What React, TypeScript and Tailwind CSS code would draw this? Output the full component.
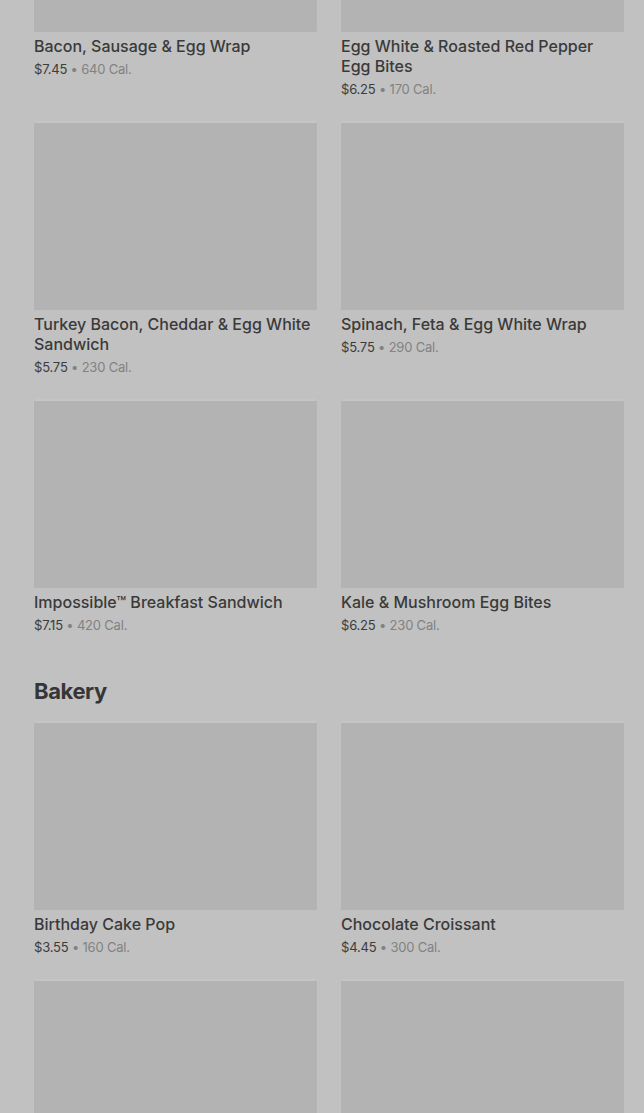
import React from "react";

type Item = { name: string; price: string; cal: string };

const breakfast: Item[] = [
  { name: "Bacon, Sausage & Egg Wrap", price: "$7.45", cal: "640 Cal." },
  { name: "Egg White & Roasted Red Pepper Egg Bites", price: "$6.25", cal: "170 Cal." },
  { name: "Turkey Bacon, Cheddar & Egg White Sandwich", price: "$5.75", cal: "230 Cal." },
  { name: "Spinach, Feta & Egg White Wrap", price: "$5.75", cal: "290 Cal." },
  { name: "Impossible™ Breakfast Sandwich", price: "$7.15", cal: "420 Cal." },
  { name: "Kale & Mushroom Egg Bites", price: "$6.25", cal: "230 Cal." },
];

const bakery: Item[] = [
  { name: "Birthday Cake Pop", price: "$3.55", cal: "160 Cal." },
  { name: "Chocolate Croissant", price: "$4.45", cal: "300 Cal." },
  { name: "", price: "", cal: "" },
  { name: "", price: "", cal: "" },
];

function Card({ item }: { item: Item }) {
  return (
    <div className="flex flex-col">
      <div className="h-[187px] bg-[#b3b3b3] shadow-[0_-2px_3px_rgba(200,200,200,0.6)]" />
      {item.name && (
        <>
          <div className="mt-1 text-[16px] leading-5 font-medium text-[#3a3a3a] tracking-normal">
            {item.name}
          </div>
          <div className="mt-[3px] text-[13px] leading-5 text-[#3c3c3c] tracking-[-0.2px]">
            {item.price}
            <span className="text-[#828282]"> • {item.cal}</span>
          </div>
        </>
      )}
    </div>
  );
}

export default function App() {
  return (
    <div
      className="bg-[#c1c1c1] h-[1113px] overflow-hidden"
      style={{ fontFamily: "Inter, 'Noto Sans', sans-serif" }}
    >
      <div className="pl-[34px] pr-[20px] -mt-[155px]">
        <div className="grid grid-cols-2 gap-x-6 gap-y-6">
          {breakfast.map((it, i) => (
            <Card key={i} item={it} />
          ))}
        </div>
        <h2 className="mt-10 mb-4 text-[22px] leading-8 font-bold text-[#363636] tracking-[-0.4px]">
          Bakery
        </h2>
        <div className="grid grid-cols-2 gap-x-6 gap-y-6">
          {bakery.map((it, i) => (
            <Card key={i} item={it} />
          ))}
        </div>
      </div>
    </div>
  );
}
